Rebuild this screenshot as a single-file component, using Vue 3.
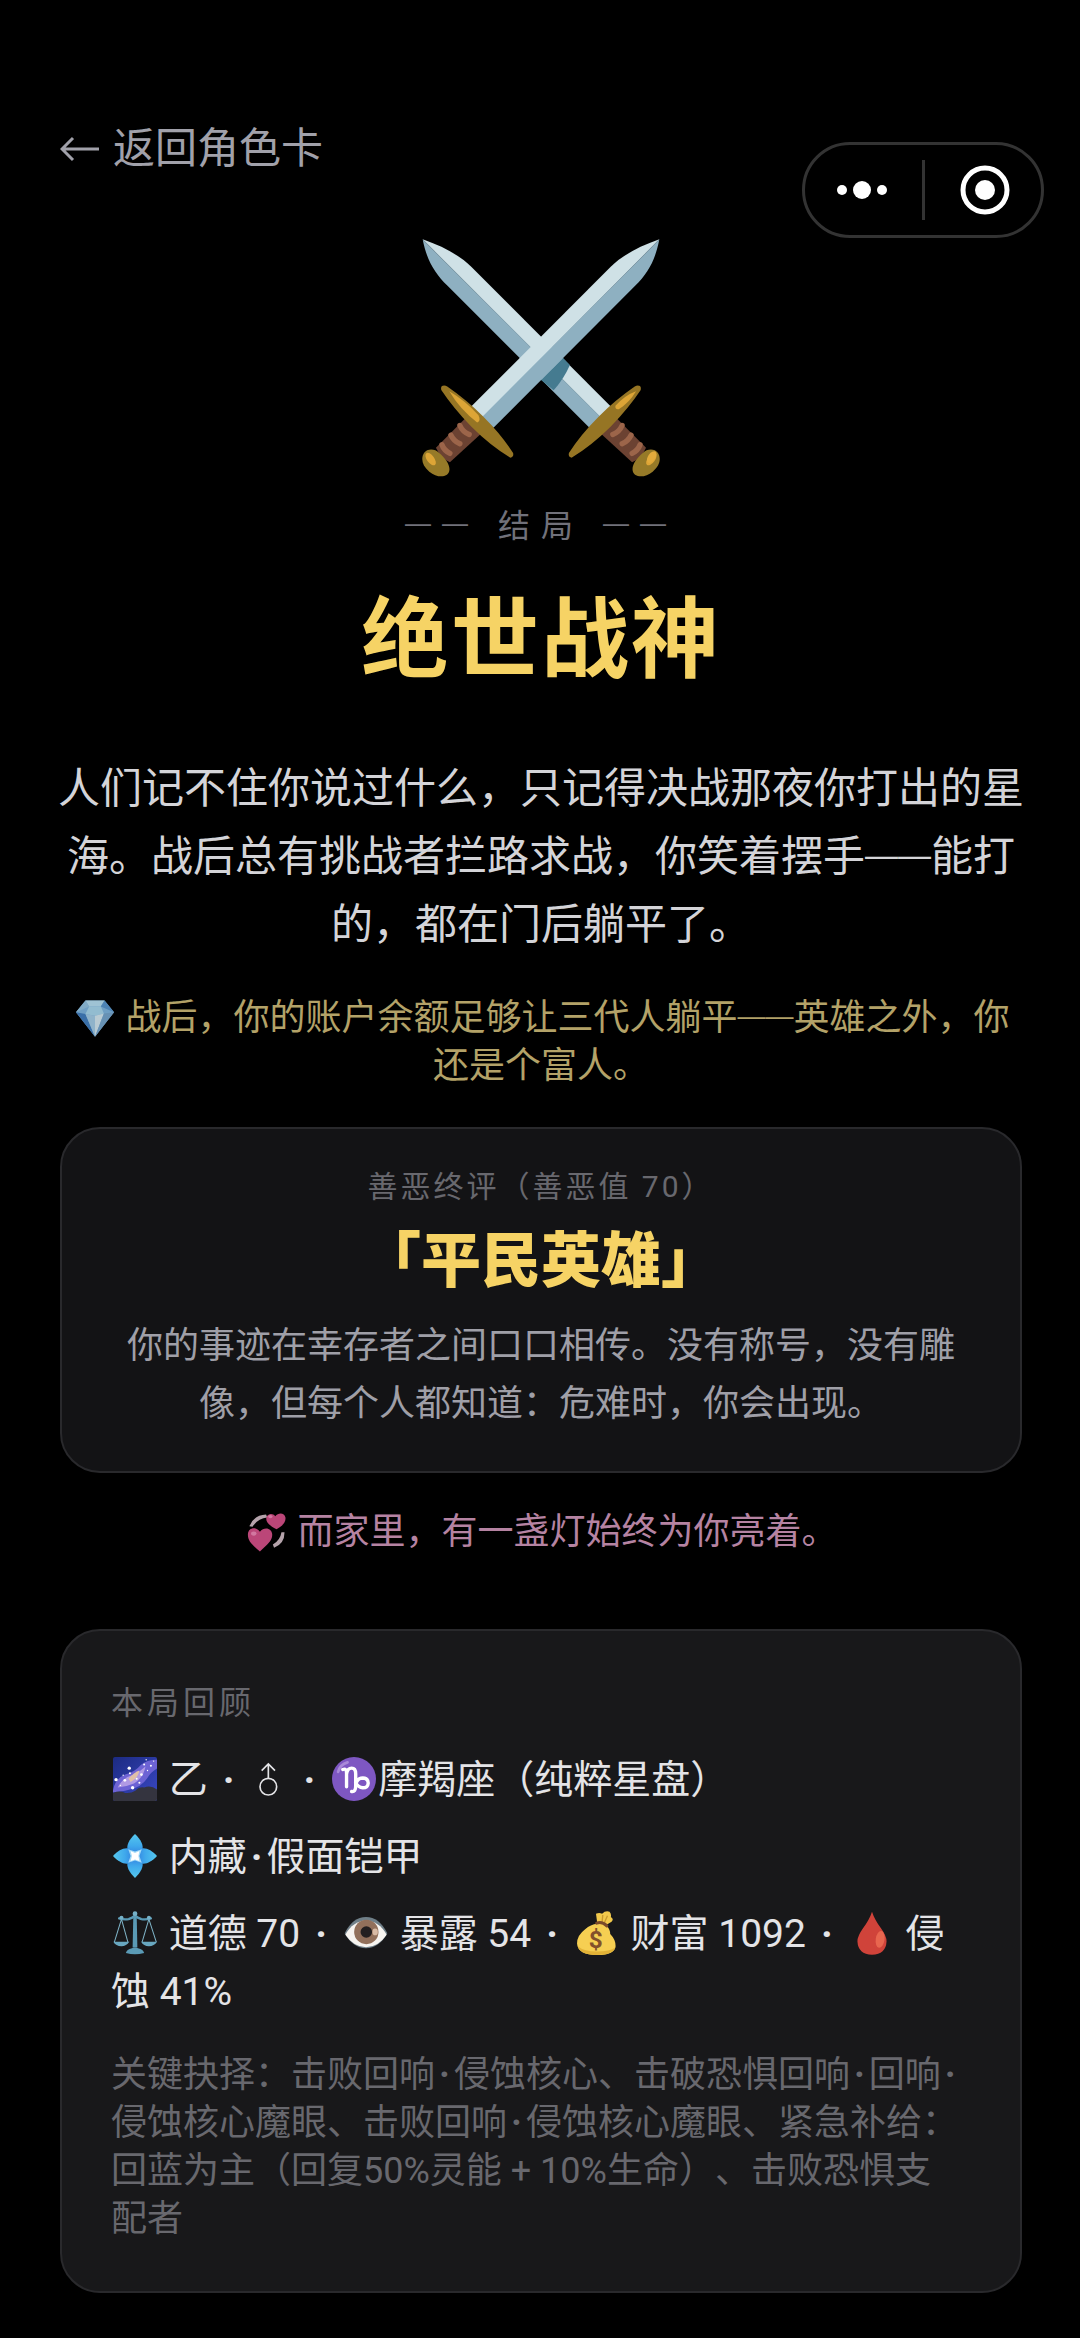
<script setup>
import {ref} from "vue";

const ending=ref({
  title:'绝世战神',
  moral:70,
  moralTitle:'「平民英雄」',
  moralDesc:'你的事迹在幸存者之间口口相传。没有称号，没有雕像，但每个人都知道：危难时，你会出现。',
  love:'而家里，有一盏灯始终为你亮着。'
});
const stats=ref({expose:54, wealth:1092, erosion:41});
const showMenu=ref(false);

function goBack(){
  window.history.back();
}
</script>

<template>
  <div class="page" lang="zh-CN">
    <header class="top">
      <button type="button" class="back" @click="goBack">
        <svg class="back-arrow" viewBox="0 0 40 26" aria-hidden="true">
          <path d="M39 13H3M13 2L2 13L13 24" fill="none" stroke="#a1a1aa" stroke-width="3"/>
        </svg>
        返回角色卡
      </button>
      <div class="capsule">
        <button type="button" aria-label="更多" @click="showMenu=!showMenu">
          <svg viewBox="0 0 60 60" aria-hidden="true">
            <circle cx="10" cy="30" r="5" fill="#fff"/>
            <circle cx="30" cy="30" r="9" fill="#fff"/>
            <circle cx="50" cy="30" r="5" fill="#fff"/>
          </svg>
        </button>
        <span class="capsule-line"></span>
        <button type="button" aria-label="关闭">
          <svg viewBox="0 0 60 60" aria-hidden="true">
            <circle cx="30" cy="30" r="22" fill="none" stroke="#fff" stroke-width="5"/>
            <circle cx="30" cy="30" r="10" fill="#fff"/>
          </svg>
        </button>
      </div>
    </header>

    <main>
      <!-- 雙劍 -->
      <svg class="swords" viewBox="66 56 716 716" aria-hidden="true">
        <path d="M68 57C128 78 178 104 215 140L634 560L603 592Z" fill="#cfe1e6"/>
        <path d="M68 57C80 120 105 160 142 196L572 626L604 592Z" fill="#8eb0c1"/>
        <path d="M490 413L511 435Q492 478 462 511L424 480Z" fill="#457b90"/>
        <g id="hilt">
          <path d="M198 594L246 640L150 728Q122 716 108 684Z" fill="#6c4232"/>
          <g stroke="#9c654a" stroke-width="16" stroke-linecap="round" fill="none">
            <path d="M180 617Q188 636 208 644"/>
            <path d="M153 646Q161 664 180 672"/>
            <path d="M126 675Q132 692 150 701"/>
          </g>
          <path d="M72 700C82 686 104 686 118 700C136 716 152 736 148 754C144 774 112 776 88 756C66 738 62 716 72 700Z" fill="#967a28"/>
          <ellipse cx="92" cy="718" rx="11" ry="22" transform="rotate(-36 92 718)" fill="#dda536"/>
        </g>
        <use href="#hilt" transform="translate(848 0) scale(-1 1)"/>
        <path d="M780 57C720 78 670 104 633 140L214 560L248 594Z" fill="#cfe1e6"/>
        <path d="M780 57C768 120 745 160 708 196L281 624L246 592Z" fill="#8eb0c1"/>
        <path d="M126 498Q134 494 142 500Q200 540 250 590Q306 646 340 700Q343 712 332 714Q272 678 214 620Q160 564 124 510Q122 502 126 498Z" fill="#967524"/>
        <path d="M148 514Q196 542 236 586Q244 604 232 608Q180 568 148 514Z" fill="#dda536"/>
        <path d="M722 498Q714 494 706 500Q648 540 598 590Q542 646 508 700Q505 712 516 714Q576 678 634 620Q688 564 724 510Q726 502 722 498Z" fill="#967524"/>
        <path d="M710 514Q676 526 648 558Q646 570 658 568Q690 548 710 514Z" fill="#dda536"/>
        <ellipse cx="757" cy="712" rx="11" ry="20" transform="rotate(34 757 712)" fill="#e2ab3c"/>
      </svg>

      <p class="sub"><span class="dash">——</span> 结局 <span class="dash">——</span></p>
      <h1>{{ending.title}}</h1>

      <p class="story">人们记不住你说过什么，只记得决战那夜你打出的星海。战后总有挑战者拦路求战，你笑着摆手<span class="dash">——</span>能打的，都在门后躺平了。</p>

      <p class="note rich">
        <svg class="emoji" viewBox="0 0 130 130" aria-hidden="true">
          <path d="M34 8H96L127 46L65 126L3 46Z" fill="#6f9fc4"/>
          <path d="M34 8H96L84 28H46Z" fill="#9fc3d4"/>
          <path d="M34 8L46 28L3 46Z" fill="#81abc6"/>
          <path d="M96 8L84 28L127 46Z" fill="#4d83b4"/>
          <path d="M46 28H84L94 50L65 58L34 52Z" fill="#92bcd0"/>
          <path d="M3 46L34 52L65 126Z" fill="#3a6fa8"/>
          <path d="M34 52L65 58V126Z" fill="#8fb3ca"/>
          <path d="M65 58L94 50L65 126Z" fill="#b9cbd3"/>
          <path d="M94 50L127 46L65 126Z" fill="#6791b4"/>
        </svg>
        战后，你的账户余额足够让三代人躺平<span class="dash">——</span>英雄之外，你还是个富人。
      </p>

      <section class="card judge">
        <p class="judge-label">善恶终评（善恶值 {{ending.moral}}）</p>
        <h2>{{ending.moralTitle}}</h2>
        <p class="judge-desc">{{ending.moralDesc}}</p>
      </section>

      <p class="note love">
        <svg class="emoji" viewBox="0 0 130 130" aria-hidden="true">
          <path d="M8 46Q22 10 62 8L66 18Q34 22 18 48Z" fill="#b5a3ab"/>
          <path d="M122 66Q122 104 88 116L84 106Q108 92 112 66Z" fill="#b5a3ab"/>
          <path d="M42 128C14 106 2 92 3 72C4 50 30 46 42 64C56 46 82 52 82 74C82 94 66 106 42 128Z" fill="#bb4678"/>
          <path d="M96 56C72 44 60 32 63 18C67 4 84 2 92 14C102 0 122 2 125 18C127 34 114 46 96 56Z" fill="#bb4678"/>
          <ellipse cx="22" cy="70" rx="9" ry="7" fill="#d277a0"/>
          <ellipse cx="76" cy="15" rx="7" ry="5" fill="#d277a0"/>
        </svg>
        {{ending.love}}
      </p>

      <section class="card review">
        <h3>本局回顾</h3>
        <p class="row">
          <!-- 銀河 -->
          <svg class="emoji" viewBox="0 0 130 130" aria-hidden="true">
            <defs>
              <linearGradient id="sky" x1="0" y1="0" x2="1" y2="1">
                <stop offset="0" stop-color="#1c2b82"/>
                <stop offset="1" stop-color="#3a48c4"/>
              </linearGradient>
            </defs>
            <rect width="130" height="130" rx="6" fill="url(#sky)"/>
            <path d="M0 98Q6 64 36 52Q66 44 82 24Q100 8 130 8V34Q112 44 100 64Q84 88 50 96Q20 104 0 104Z" fill="#6d63d4"/>
            <path d="M14 90Q30 60 56 54Q80 44 96 28Q90 62 62 78Q38 88 14 90Z" fill="#b09ae4"/>
            <path d="M46 64Q64 44 78 40Q74 62 52 74Z" fill="#e0bfa8"/>
            <g fill="#fff">
              <circle cx="48" cy="33" r="5"/><circle cx="9" cy="67" r="5"/><circle cx="35" cy="69" r="4"/>
              <circle cx="58" cy="91" r="5"/><circle cx="84" cy="52" r="4"/><circle cx="70" cy="64" r="3"/>
              <circle cx="92" cy="22" r="3"/><circle cx="112" cy="26" r="3"/><circle cx="102" cy="40" r="2"/>
              <circle cx="22" cy="84" r="2"/><circle cx="78" cy="76" r="3"/><circle cx="50" cy="48" r="3"/>
              <circle cx="98" cy="8" r="2"/><circle cx="120" cy="12" r="2"/><circle cx="30" cy="54" r="2"/>
            </g>
            <path d="M0 106Q20 98 36 106Q52 108 66 100Q76 88 92 90Q112 82 130 96V124Q130 130 124 130H6Q0 130 0 124Z" fill="#34343f"/>
          </svg>
          乙<i class="dot sep">·</i>
          <svg class="male" viewBox="0 0 117 117" role="img" aria-label="男">
            <path d="M58 49V6M38 26L58 6L78 26" fill="none" stroke="#e4e4e7" stroke-width="5"/>
            <circle cx="58" cy="74" r="25" fill="none" stroke="#e4e4e7" stroke-width="5"/>
          </svg>
          <i class="dot sep">·</i>
          <!-- 摩羯 -->
          <svg class="emoji" viewBox="0 0 130 130" aria-hidden="true">
            <circle cx="65" cy="65" r="65" fill="#7e57c2"/>
            <path d="M18 44Q24 22 46 16" fill="none" stroke="#a98ad8" stroke-width="8" stroke-linecap="round"/>
            <path d="M32 37Q43 32 43 48V88M43 50Q46 33 58 33Q70 33 70 50V86Q70 104 58 102M70 82Q74 62 91 62Q107 63 107 77Q106 91 91 91Q78 90 70 76" fill="none" stroke="#fff" stroke-width="10" stroke-linecap="round"/>
          </svg>摩羯座（纯粹星盘）
        </p>
        <p class="row">
          <svg class="emoji" viewBox="0 0 130 130" aria-hidden="true">
            <defs>
              <linearGradient id="petal" x1="0" y1="0" x2="0" y2="1">
                <stop offset="0" stop-color="#55c8ee"/>
                <stop offset="0.5" stop-color="#3fa9ec"/>
                <stop offset="1" stop-color="#2f74dc"/>
              </linearGradient>
              <path id="leaf" d="M65 0C48 16 38 34 44 50L65 70L86 50C92 34 82 16 65 0Z" fill="url(#petal)"/>
            </defs>
            <use href="#leaf"/>
            <use href="#leaf" transform="rotate(90 65 65)"/>
            <use href="#leaf" transform="rotate(180 65 65)"/>
            <use href="#leaf" transform="rotate(270 65 65)"/>
            <path d="M45 45L65 52L85 45L78 65L85 85L65 78L45 85L52 65Z" fill="#a5dcf8"/>
            <path d="M52 50L65 56L78 50L75 65L78 80L65 75L52 80L56 65Z" fill="#fff"/>
          </svg>
          内藏<i class="dot">·</i>假面铠甲
        </p>
        <p class="row">
          <!-- 天平 -->
          <svg class="emoji" viewBox="0 0 130 130" aria-hidden="true">
            <g fill="none" stroke="#7fb4c8" stroke-width="3">
              <path d="M25 24L4 92M25 24L44 92M106 24L86 92M106 24L128 92"/>
            </g>
            <path d="M18 22Q32 26 46 24Q58 20 65 14Q72 20 84 24Q98 26 112 22" fill="none" stroke="#5a9ab5" stroke-width="7" stroke-linecap="round"/>
            <path d="M60 14H70L72 108H58Z" fill="#5a9ab5"/>
            <circle cx="65" cy="8" r="7" fill="#76b1c8"/>
            <circle cx="25" cy="20" r="6" fill="#76b1c8"/>
            <circle cx="106" cy="20" r="6" fill="#76b1c8"/>
            <path d="M1 91H48Q40 104 25 104Q8 104 1 91ZM83 91H130Q122 104 106 104Q90 104 83 91Z" fill="#68a7c0"/>
            <path d="M38 124Q40 114 56 110Q65 106 74 110Q90 114 92 124Q65 132 38 124Z" fill="#5a9ab5"/>
          </svg>
          道德 {{ending.moral}}<i class="dot sep">·</i>
          <!-- 眼睛 -->
          <svg class="emoji" viewBox="0 0 130 130" aria-hidden="true">
            <path d="M2 66Q26 18 65 18Q104 18 128 66Q104 110 65 110Q26 110 2 66Z" fill="#6f7f88"/>
            <path d="M4 70Q26 30 65 28Q104 30 126 70Q102 106 65 107Q28 106 4 70Z" fill="#f7f4f0"/>
            <circle cx="66" cy="62" r="36" fill="#92705b"/>
            <circle cx="66" cy="62" r="17" fill="#231f20"/>
            <ellipse cx="92" cy="62" rx="8" ry="10" fill="#d9bba5"/>
          </svg>
          暴露 {{stats.expose}}<i class="dot sep">·</i>
          <!-- 錢袋 -->
          <svg class="emoji" viewBox="0 0 130 130" aria-hidden="true">
            <path d="M66 38L62 8Q72 4 80 8Q90 -2 102 2Q108 8 106 18Q116 24 108 32Q100 38 90 42Z" fill="#f2c94c"/>
            <path d="M82 12L80 34M96 14L86 36" stroke="#c99a2e" stroke-width="4" fill="none"/>
            <path d="M66 38Q82 34 94 44Q104 54 104 68Q120 84 120 104Q118 130 66 130Q8 130 6 96Q6 72 30 54Q46 40 66 38Z" fill="#f6cf52"/>
            <path d="M8 104Q16 130 66 130Q112 130 119 108Q104 120 64 120Q28 120 8 104Z" fill="#e2b237"/>
            <path d="M64 36Q80 30 94 44" stroke="#7a4a2b" stroke-width="9" stroke-linecap="round" fill="none"/>
            <text x="61" y="108" text-anchor="middle" font-family="Roboto, sans-serif" font-size="72" font-weight="700" fill="#83502b">$</text>
          </svg>
          财富 {{stats.wealth}}<i class="dot sep">·</i>
          <!-- 血滴 -->
          <svg class="emoji" viewBox="0 0 130 130" aria-hidden="true">
            <path d="M65 2Q72 24 92 52Q108 74 108 90Q106 128 65 129Q24 128 22 90Q22 74 38 52Q58 24 65 2Z" fill="#d0433a"/>
            <ellipse cx="89" cy="84" rx="13" ry="25" transform="rotate(8 89 84)" fill="#e8664f"/>
          </svg>
          侵蚀 {{stats.erosion}}%
        </p>
        <p class="log">关键抉择：击败回响<i class="dot">·</i>侵蚀核心、击破恐惧回响<i class="dot">·</i>回响<i class="dot">·</i>侵蚀核心魔眼、击败回响<i class="dot">·</i>侵蚀核心魔眼、紧急补给：回蓝为主（回复50%灵能 + 10%生命）、击败恐惧支配者</p>
      </section>
    </main>
  </div>
</template>

<style>
body {
  background-color: #000;
}
</style>

<style scoped>
.page {
  box-sizing: border-box;
  min-height: 100vh;
  padding: 124px 58px 40px 60px;
  background-color: #000;
  color: #e4e4e7;
  font-family: Roboto, "Noto Sans CJK SC", sans-serif;
  text-spacing-trim: space-all;
}

p, h1, h2, h3 {
  margin: 0;
}

button {
  padding: 0;
  border: none;
  background: none;
  font-family: inherit;
  cursor: pointer;
}

.back {
  display: flex;
  align-items: center;
  gap: 13px;
  color: #a1a1aa;
  font-size: 42px;
  line-height: 50px;
}

.back-arrow {
  width: 40px;
  height: 26px;
}

.capsule {
  position: absolute;
  top: 142px;
  right: 36px;
  box-sizing: border-box;
  display: flex;
  align-items: center;
  justify-content: center;
  gap: 30px;
  width: 242px;
  height: 96px;
  border: 3px solid #333;
  border-radius: 48px;
  background-color: #000;
}

.capsule button {
  display: flex;
}

.capsule svg {
  width: 60px;
  height: 60px;
}

.capsule-line {
  width: 3px;
  height: 60px;
  background-color: #333;
}

main {
  display: flex;
  flex-direction: column;
  text-align: center;
}

.swords {
  align-self: center;
  width: 238px;
  height: 238px;
  margin-top: 65px;
}

.dash {
  font-family: "Liberation Sans", sans-serif;
  line-height: 1;
  vertical-align: 5px;
}

.sub {
  margin-top: 25px;
  color: #71717a;
  font-size: 32px;
  line-height: 48px;
  letter-spacing: 11px;
}

.sub .dash {
  font-size: 26px;
}

h1 {
  margin-top: 35px;
  color: #f6d365;
  font-size: 88px;
  line-height: 110px;
  letter-spacing: 2px;
}

.story {
  margin: 60px -4px 0;
  color: #d4d4d8;
  font-size: 42px;
  line-height: 68px;
}

.story .dash {
  font-size: 33px;
}

.note {
  margin-top: 35px;
  font-size: 36px;
  line-height: 48px;
}

.note .dash {
  font-size: 28px;
}

.rich {
  color: #b3a268;
}

.love {
  color: #b583a2;
}

.emoji {
  width: 44px;
  height: 44px;
  margin: 0 2px;
  vertical-align: -8px;
}

.note .emoji {
  width: 40px;
  height: 40px;
}

.card {
  border: 2px solid #29292c;
  border-radius: 40px;
}

.judge {
  margin-top: 37px;
  padding: 36px 46px 38px;
  background-color: #131315;
}

.judge-label {
  color: #68686e;
  font-size: 30px;
  line-height: 44px;
  letter-spacing: 3px;
}

h2 {
  margin-top: 17px;
  color: #f6d365;
  font-size: 60px;
  font-weight: 900;
  line-height: 72px;
}

.judge-desc {
  margin-top: 19px;
  color: #9f9fa7;
  font-size: 36px;
  line-height: 58px;
}

.review {
  margin-top: 73px;
  padding: 50px 57px 48px 49px;
  background-color: #18181a;
  text-align: left;
}

h3 {
  margin-bottom: 26px;
  color: #68686e;
  font-size: 32px;
  font-weight: 400;
  line-height: 44px;
  letter-spacing: 4px;
}

.row {
  margin-bottom: 19px;
  font-size: 39px;
  line-height: 58px;
}

.dot {
  padding: 0 4px;
  font-style: normal;
  font-weight: 700;
}

/* 欄位之間的分隔點 */
.sep {
  padding: 0 15px;
}

.male {
  width: 39px;
  height: 39px;
  vertical-align: -8px;
}

.log {
  margin-top: 30px;
  color: #68686e;
  font-size: 36px;
  line-height: 48px;
}
</style>
